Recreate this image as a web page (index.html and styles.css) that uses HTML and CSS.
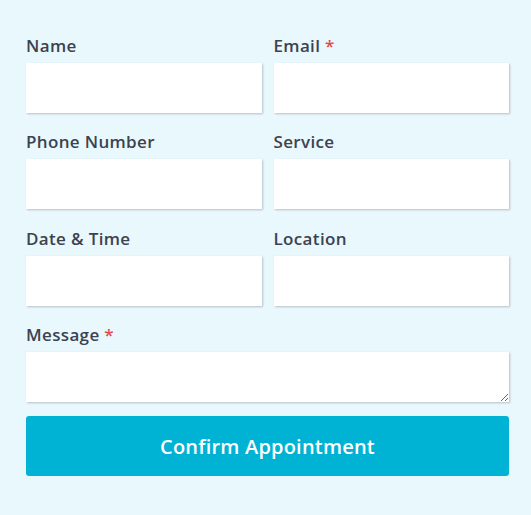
FILE: index.html
```html
<!DOCTYPE html>
<html lang="en">
  <head>
    <meta charset="UTF-8" />
    <title>Book an Appointment</title>
    <link rel="stylesheet" href="styles.css">
  </head>
  <body>
    <form class="booking-form">
      <div class="field">
        <label for="name">Name</label>
        <input type="text" id="name" />
      </div>
      <div class="field">
        <label for="email">Email <span class="req">*</span></label>
        <input type="email" id="email" />
      </div>
      <div class="field">
        <label for="phone">Phone Number</label>
        <input type="tel" id="phone" />
      </div>
      <div class="field">
        <label for="service">Service</label>
        <input type="text" id="service" />
      </div>
      <div class="field">
        <label for="datetime">Date &amp; Time</label>
        <input type="text" id="datetime" />
      </div>
      <div class="field">
        <label for="location">Location</label>
        <input type="text" id="location" />
      </div>
      <div class="field full">
        <label for="message">Message <span class="req">*</span></label>
        <textarea id="message"></textarea>
      </div>
      <button type="submit" class="full">Confirm Appointment</button>
    </form>
  </body>
</html>
```

FILE: styles.css
```css
body {
  font-family: "Open Sans", Lato, sans-serif;
  background: #e9f8fc;
  margin: 0;
  padding: 0;
}

.booking-form {
  display: grid;
  grid-template-columns: 1fr 1fr;
  column-gap: 12px;
  row-gap: 17.33px;
  padding: 34px 22px 0 26px;
}

.field label {
  display: block;
  font-size: 17px;
  line-height: 24px;
  font-weight: 600;
  letter-spacing: 0.35px;
  color: #3b4250;
  margin-bottom: 5px;
}

.req {
  color: #e5484d;
}

.field input,
.field textarea {
  display: block;
  box-sizing: border-box;
  width: 100%;
  height: 50px;
  border: none;
  border-radius: 0;
  background: white;
  box-shadow: 1px 1px 2px rgba(0, 0, 0, 0.22);
  font-family: inherit;
  font-size: 15px;
  padding: 8px 12px;
}

.field textarea {
  resize: vertical;
}

.full {
  grid-column: 1 / -1;
}

button {
  height: 60px;
  margin-top: -3px;
  border: none;
  border-radius: 3px;
  background-color: #00b2d4;
  color: white;
  font-family: inherit;
  font-size: 20px;
  font-weight: 600;
  letter-spacing: 0.2px;
  cursor: pointer;
}
```
